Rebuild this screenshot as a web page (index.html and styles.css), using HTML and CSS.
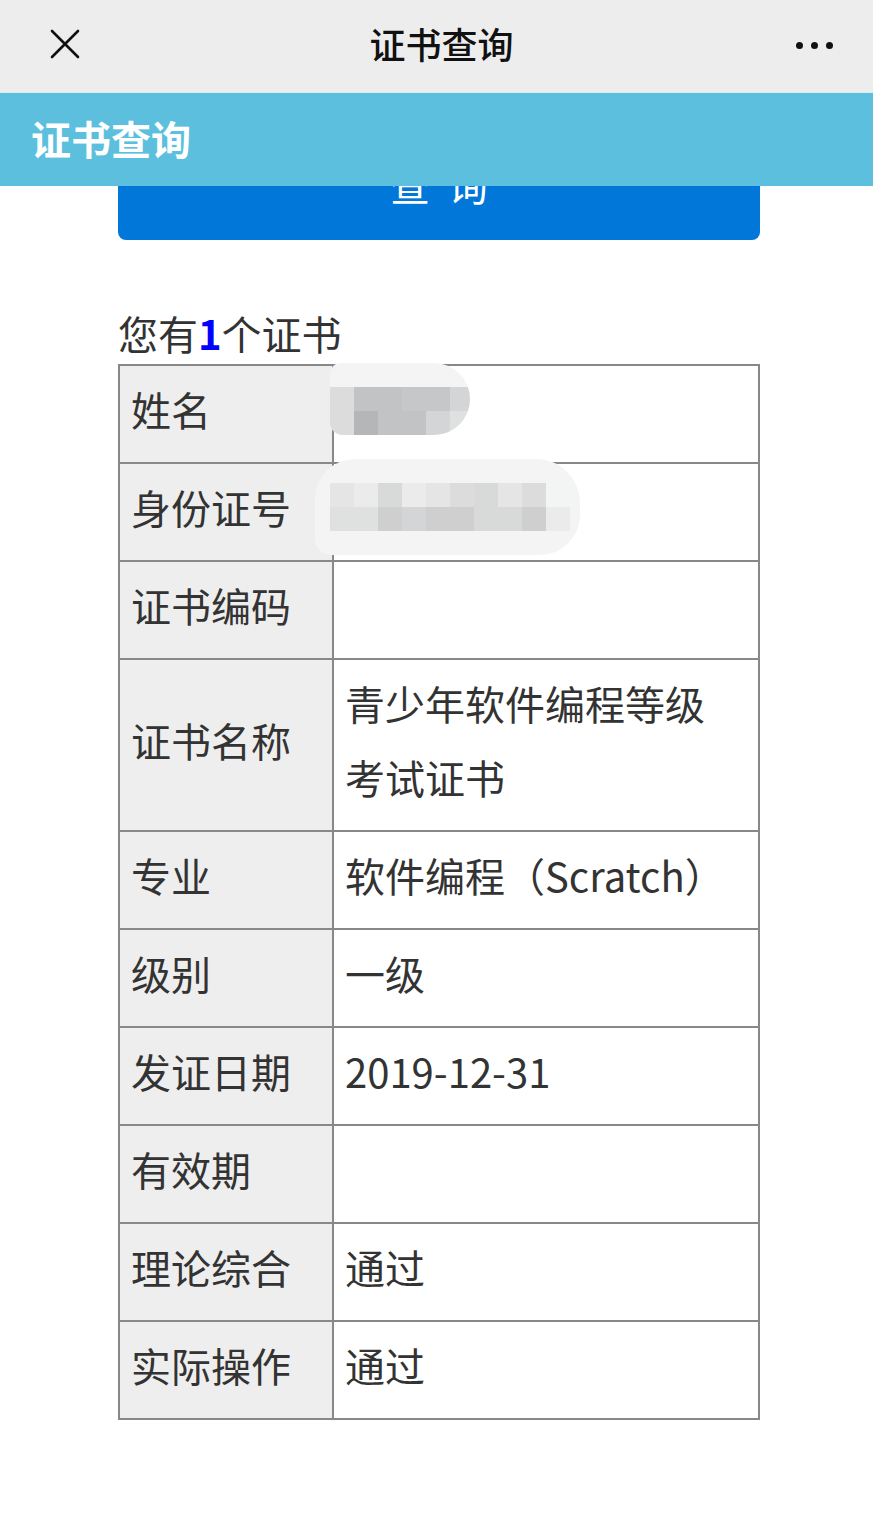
FILE: index.html
```html
<!DOCTYPE html>
<html lang="zh-CN">
<head>
<meta charset="utf-8">
<title>证书查询</title>
<link rel="stylesheet" href="styles.css">
</head>
<body>
<header class="topbar">
  <div class="nav">
    <svg class="close" width="30" height="30" viewBox="0 0 30 30" aria-label="关闭">
      <path d="M2 2 L28 28 M28 2 L2 28" stroke="#111" stroke-width="2.6" stroke-linecap="round" fill="none"/>
    </svg>
    <div class="nav-title">证书查询</div>
    <div class="more"><span></span><span></span><span></span></div>
  </div>
  <div class="banner">证书查询</div>
</header>

<main class="content">
  <button class="query-btn" type="button"><span>查</span><span>询</span></button>

  <p class="count">您有<b class="num">1</b>个证书</p>

  <div class="table-wrap">
    <table class="cert">
      <tr><td class="label">姓名</td><td class="value"></td></tr>
      <tr><td class="label">身份证号</td><td class="value"></td></tr>
      <tr><td class="label">证书编码</td><td class="value"></td></tr>
      <tr><td class="label">证书名称</td><td class="value">青少年软件编程等级考试证书</td></tr>
      <tr><td class="label">专业</td><td class="value">软件编程（Scratch）</td></tr>
      <tr><td class="label">级别</td><td class="value">一级</td></tr>
      <tr><td class="label">发证日期</td><td class="value">2019-12-31</td></tr>
      <tr><td class="label">有效期</td><td class="value"></td></tr>
      <tr><td class="label">理论综合</td><td class="value">通过</td></tr>
      <tr><td class="label">实际操作</td><td class="value">通过</td></tr>
    </table>

    <div class="halo halo-name">
      <div class="pix pix-name">
        <i class="k7"></i><i class="k2"></i><i class="k2"></i><i class="k3"></i><i class="k3"></i><i class="k5"></i>
        <i class="k7"></i><i class="k1"></i><i class="k2"></i><i class="k2"></i><i class="k5"></i><i class="k8"></i>
      </div>
    </div>
    <div class="halo halo-id">
      <div class="pix pix-id">
        <i class="k9"></i><i class="k10"></i><i class="k6"></i><i class="k10"></i><i class="k9"></i><i class="k7"></i><i class="k6"></i><i class="k9"></i><i class="k7"></i><i class="k11"></i>
        <i class="k8"></i><i class="k8"></i><i class="k4"></i><i class="k5"></i><i class="k4"></i><i class="k4"></i><i class="k6"></i><i class="k6"></i><i class="k4"></i><i class="k10"></i>
      </div>
    </div>
  </div>
</main>
</body>
</html>
```

FILE: styles.css
```css
* { box-sizing: border-box; }

html, body {
  margin: 0;
  padding: 0;
  background: #ffffff;
  font-family: "Noto Sans CJK SC", "Noto Sans", sans-serif;
  color: #333333;
}

.topbar {
  position: fixed;
  top: 0;
  left: 0;
  right: 0;
  z-index: 10;
}

.nav {
  height: 92px;
  background: #ededed;
  display: grid;
  grid-template-columns: 1fr auto 1fr;
  align-items: center;
  padding: 0 40px 0 50px;
}

.close {
  display: block;
  margin-top: -4px;
}

.nav-title {
  font-size: 36px;
  font-weight: 500;
  color: #111111;
  line-height: 44px;
  margin-top: -6px;
}

.more {
  justify-self: end;
  display: flex;
  gap: 8px;
  margin-top: -2px;
}

.more span {
  width: 7px;
  height: 7px;
  border-radius: 50%;
  background: #111111;
}

.banner {
  height: 94px;
  background: #5bbfdd;
  color: #ffffff;
  font-size: 40px;
  font-weight: 700;
  display: flex;
  align-items: center;
  padding-left: 31px;
  padding-bottom: 4px;
  border-top: 1px solid #d6eef5;
}

.content {
  width: 642px;
  margin-left: 118px;
  padding-top: 128px;
  padding-bottom: 100px;
}

.query-btn {
  display: flex;
  justify-content: center;
  align-items: center;
  gap: 18px;
  width: 100%;
  height: 112px;
  border: none;
  border-radius: 8px;
  background: #0077d9;
  color: #ffffff;
  font-family: inherit;
  font-size: 40px;
  padding: 0;
}

.count {
  margin: 69px 0 7px;
  font-size: 40px;
  line-height: 48px;
  color: #333333;
}

.num {
  color: #0000ff;
  font-weight: 700;
}

.table-wrap {
  position: relative;
}

.cert {
  width: 642px;
  table-layout: fixed;
  border-collapse: separate;
  border-spacing: 0;
  border: 1px solid #888888;
}

.cert td {
  border: 1px solid #888888;
  font-size: 40px;
  line-height: 74px;
  color: #333333;
  vertical-align: middle;
  padding: 6px 12px 16px;
}

.cert .label {
  width: 214px;
  background: #eeeeee;
  white-space: nowrap;
  padding-left: 11px;
}

.cert .value {
  padding: 6px 30px 16px 11px;
}

.halo {
  position: absolute;
  background: #f4f4f4;
  overflow: hidden;
}

.halo-name {
  left: 212px;
  top: -1px;
  width: 140px;
  height: 72px;
  border-radius: 12px 40px 40px 14px;
}

.halo-id {
  left: 197px;
  top: 95px;
  width: 265px;
  height: 96px;
  border-radius: 40px 44px 40px 16px;
}

.pix {
  position: absolute;
  display: grid;
  grid-auto-rows: 24px;
}

.pix-name {
  left: 0;
  top: 24px;
  grid-template-columns: repeat(6, 24px);
}

.pix-id {
  left: 15px;
  top: 24px;
  grid-template-columns: repeat(10, 24px);
}

.pix i { display: block; }

.k1 { background: #b5b6b8; }
.k2 { background: #c2c3c5; }
.k3 { background: #c6c7c9; }
.k4 { background: #cfcfd0; }
.k5 { background: #d4d5d6; }
.k6 { background: #d8d9d9; }
.k7 { background: #dcdcdc; }
.k8 { background: #dfe0e0; }
.k9 { background: #e5e5e5; }
.k10 { background: #ebebeb; }
.k11 { background: #f3f4f4; }
```
